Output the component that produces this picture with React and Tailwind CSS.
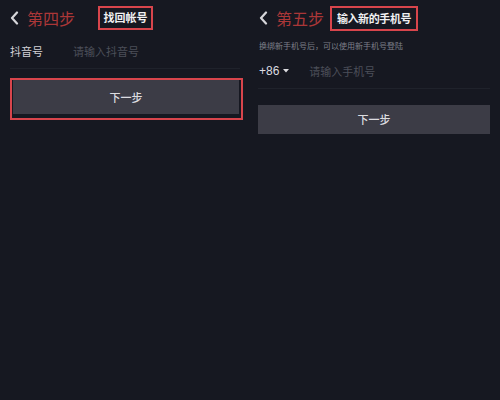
const cjk = { fontFamily: '"Noto Sans CJK SC", "Liberation Sans", sans-serif' };

const Chevron = () => (
  <svg width="9" height="14" viewBox="0 0 9 14" className="shrink-0">
    <polyline
      points="7,1.5 2,7 7,12.5"
      fill="none"
      stroke="#d6d6da"
      strokeWidth="2.2"
      strokeLinecap="round"
      strokeLinejoin="round"
    />
  </svg>
);

const StepTitle = ({ text }) => (
  <span
    className="text-[16px] leading-none text-[#ab3738]"
    style={{ fontFamily: '"Liberation Serif", "Noto Sans CJK SC", serif' }}
  >
    {text}
  </span>
);

const App = () => {
  return (
    <div
      className="w-[500px] h-[400px] bg-[#161821] flex overflow-hidden"
      style={cjk}
    >
      {/* step four */}
      <div className="w-[250px] flex flex-col">
        <div className="h-[35px] flex items-center pl-[10px]">
          <Chevron />
          <span className="ml-[8px]">
            <StepTitle text="第四步" />
          </span>
          <div className="ml-[23px] h-[24px] w-[55px] border-2 border-[#d8454c] flex items-center justify-center">
            <span className="text-[11px] font-bold text-[#f0f0f2]">找回帐号</span>
          </div>
        </div>
        <div className="mx-[10px] h-[34px] flex items-center border-b border-[#1f222b]">
          <span className="text-[11px] text-[#d2d2d6] w-[63px]">抖音号</span>
          <span className="text-[11px] text-[#4c4f59]">请输入抖音号</span>
        </div>
        <div className="mt-[9px] ml-[10px] w-[233px] h-[42px] border-2 border-[#d8454c] pl-[1px] pr-[2px] pb-[4px]">
          <div className="h-full bg-[#3c3c46] flex items-center justify-center">
            <span className="text-[11px] font-medium text-[#dcdce0]">下一步</span>
          </div>
        </div>
      </div>

      {/* step five */}
      <div className="w-[250px] flex flex-col pl-[8px]">
        <div className="h-[36px] flex items-center pl-[1px]">
          <Chevron />
          <span className="ml-[8px]">
            <StepTitle text="第五步" />
          </span>
          <div className="ml-[6px] h-[25px] w-[88px] border-2 border-[#d8454c] flex items-center justify-center">
            <span className="text-[11px] font-bold text-[#f0f0f2] tracking-[-0.4px]">输入新的手机号</span>
          </div>
        </div>
        <div className="mt-[5px] pl-[1px] text-[8px] leading-[10px] text-[#7e808a]">
          换绑新手机号后，可以使用新手机号登陆
        </div>
        <div className="mt-[3px] h-[35px] w-[232px] flex items-center border-b border-[#1f222b] pl-[1px]">
          <span
            className="text-[12px] text-[#dcdce0]"
            style={{ fontFamily: '"Liberation Sans", sans-serif' }}
          >
            +86
          </span>
          <svg width="6" height="4" viewBox="0 0 6 4" className="ml-[4px]">
            <polygon points="0,0 6,0 3,3.5" fill="#dcdce0" />
          </svg>
          <span className="ml-[20px] text-[11px] text-[#4c4f59]">请输入手机号</span>
        </div>
        <div className="mt-[16px] w-[232px] h-[29px] bg-[#3c3c46] flex items-center justify-center">
          <span className="text-[11px] font-medium text-[#dcdce0]">下一步</span>
        </div>
      </div>
    </div>
  );
};

export default App;
